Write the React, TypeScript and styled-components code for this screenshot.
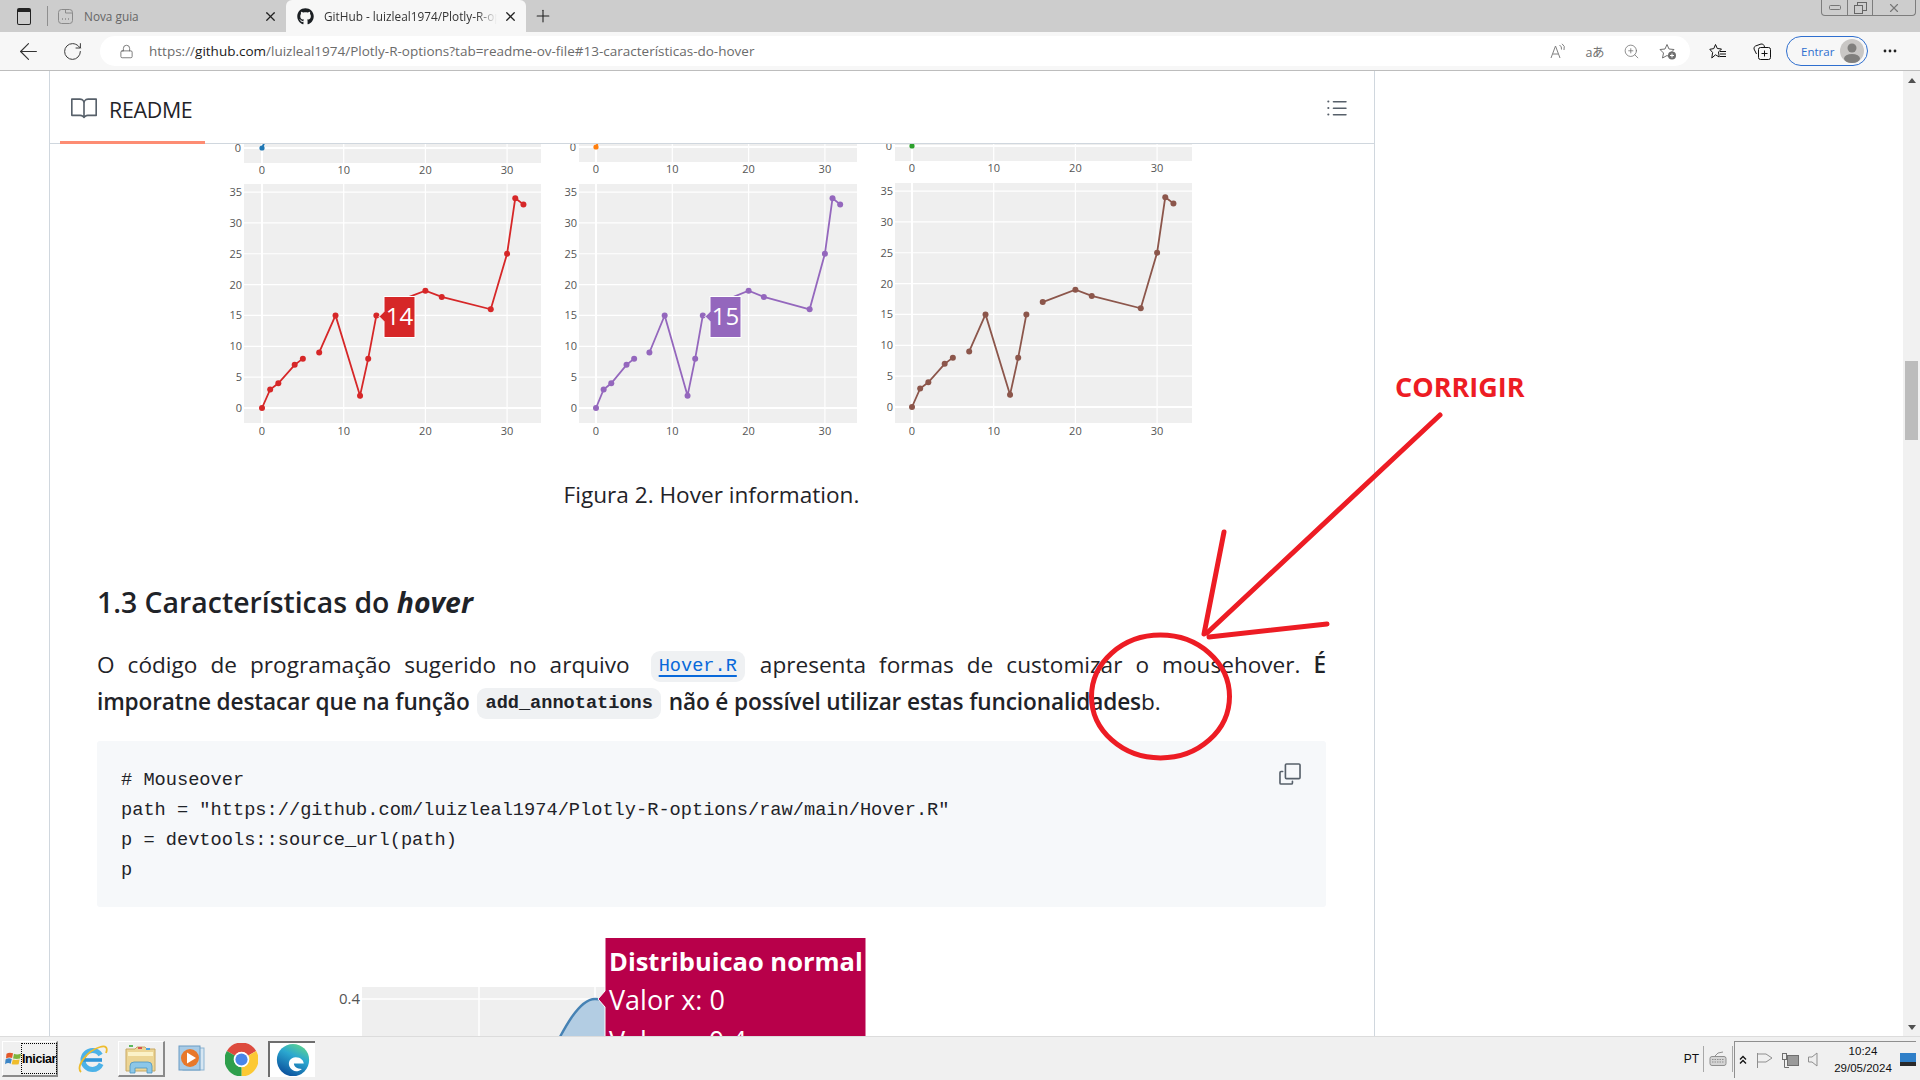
import React from 'react';
import styled, { createGlobalStyle } from 'styled-components';
import { FaGithub } from 'react-icons/fa';
import { GoBook, GoCopy, GoListUnordered } from 'react-icons/go';
import { ArrowLeft, Lock, Plus, RotateCw, X, ZoomIn } from 'lucide-react';

const UI_FONT = '"Open Sans", "Noto Sans", sans-serif';
const MONO_FONT = '"Liberation Mono", monospace';

const GlobalStyle = createGlobalStyle`
  html, body {
    margin: 0;
    height: 100%;
    overflow: hidden;
    background: #fff;
  }
  #root {
    height: 100%;
  }
`;

const Shell = styled.div`
  display: flex;
  flex-direction: column;
  height: 1080px;
  width: 1920px;
  font-family: ${UI_FONT};
  color: #1f2328;
`;

/* browser chrome */
const TabBar = styled.div`
  display: flex;
  align-items: stretch;
  height: 32px;
  flex: none;
  background: #cdcdcd;
`;

const SidebarButton = styled.div`
  display: flex;
  align-items: center;
  justify-content: center;
  width: 47px;
`;

const SidebarGlyph = styled.span`
  display: block;
  width: 12px;
  height: 12px;
  border: 1.5px solid #222;
  border-top-width: 4px;
  border-radius: 2px;
`;

const TabDivider = styled.span`
  width: 1px;
  height: 20px;
  align-self: center;
  background: #8f8f8f;
`;

const Tab = styled.div<{ $active?: boolean; $width: number }>`
  display: flex;
  align-items: center;
  width: ${(p) => p.$width}px;
  padding: 0 8px 0 ${(p) => (p.$active ? 11 : 10)}px;
  box-sizing: border-box;
  border-radius: 6px 6px 0 0;
  background: ${(p) => (p.$active ? '#f7f7f7' : 'transparent')};
  color: ${(p) => (p.$active ? '#333' : '#666')};
  font-size: 11.8px;
`;

const BlankFavicon = styled.svg`
  flex: none;
  width: 15px;
  height: 15px;
  margin-right: 11px;
`;

const TabTitle = styled.span<{ $fade?: boolean }>`
  flex: 1;
  overflow: hidden;
  white-space: nowrap;
  ${(p) =>
    p.$fade &&
    `margin-left: 10px;
     -webkit-mask-image: linear-gradient(to right, #000 88%, transparent);
     mask-image: linear-gradient(to right, #000 88%, transparent);`}
`;

const NewTab = styled.div`
  display: flex;
  align-items: center;
  justify-content: center;
  width: 34px;
`;

const WindowControls = styled.div`
  display: flex;
  margin-left: auto;
  margin-right: 4px;
  height: 16px;
  box-sizing: border-box;
  border: 1px solid #7d7d7d;
  border-top: none;
  border-radius: 0 0 4px 4px;
`;

const WindowButton = styled.div<{ $width: number; $last?: boolean }>`
  display: flex;
  align-items: center;
  justify-content: center;
  width: ${(p) => p.$width}px;
  border-right: ${(p) => (p.$last ? 'none' : '1px solid #7d7d7d')};
`;

const Toolbar = styled.div`
  display: flex;
  align-items: center;
  height: 39px;
  flex: none;
  box-sizing: border-box;
  padding-left: 6px;
  background: #f7f7f7;
  border-bottom: 1px solid #bdbdbd;
`;

const NavButton = styled.div`
  display: flex;
  align-items: center;
  justify-content: center;
  width: 44px;
  height: 30px;
  flex: none;
`;

const UrlPill = styled.div`
  display: flex;
  align-items: center;
  width: 1590px;
  height: 30px;
  flex: none;
  margin: 0 6px;
  padding-left: 19px;
  box-sizing: border-box;
  background: #fff;
  border-radius: 15px;
`;

const UrlText = styled.span`
  margin-left: 15px;
  font-size: 13.5px;
  color: #6b6b6b;
  white-space: nowrap;
`;

const UrlHost = styled.span`
  color: #1a1a1a;
`;

const UrlActions = styled.div`
  display: flex;
  align-items: center;
  margin-left: auto;
  margin-right: 4px;
`;

const UrlAction = styled.div`
  display: flex;
  align-items: center;
  justify-content: center;
  width: 36.5px;
  height: 30px;
  color: #707070;
`;

const TranslateGlyph = styled.span`
  font-family: ${UI_FONT}, 'Noto Sans CJK JP';
  font-size: 12.5px;
  letter-spacing: -0.5px;
  color: #707070;
`;

const EntrarButton = styled.div`
  display: flex;
  align-items: center;
  justify-content: space-between;
  width: 82px;
  height: 30px;
  flex: none;
  margin-left: 2px;
  padding: 0 3px 0 14px;
  box-sizing: border-box;
  border: 1.3px solid #2f6fcf;
  border-radius: 15px;
  color: #2f6fcf;
  font-size: 11.5px;
`;

const Avatar = styled.svg`
  width: 24px;
  height: 24px;
`;

/* page */
const Viewport = styled.div`
  display: flex;
  flex: 1;
  min-height: 0;
`;

const PageArea = styled.div`
  flex: 1;
  min-width: 0;
  overflow: hidden;
  padding-left: 49px;
`;

const Article = styled.article`
  width: 1326px;
  height: 100%;
  box-sizing: border-box;
  overflow: hidden;
  border-left: 1px solid #d0d7de;
  border-right: 1px solid #d0d7de;
`;

const ReadmeHeader = styled.header`
  display: flex;
  align-items: center;
  height: 73px;
  box-sizing: border-box;
  padding: 2px 24px 0 21px;
  border-bottom: 1px solid #d0d7de;
  position: relative;
`;

const ReadmeTitle = styled.span`
  margin-left: 12px;
  padding-top: 2px;
  font-size: 21.4px;
  font-weight: 500;
  letter-spacing: -0.3px;
  color: #1f2328;
`;

const ActiveUnderline = styled.span`
  position: absolute;
  left: 10px;
  bottom: -1px;
  width: 145px;
  height: 3px;
  background: #fd8c73;
`;

const OutlineButton = styled.div`
  display: flex;
  margin-left: auto;
  color: #57606a;
`;

const Content = styled.div`
  padding: 0 48px 0 47px;
`;

const FigureRow = styled.div<{ $top?: number }>`
  display: flex;
  justify-content: center;
  margin-top: ${(p) => p.$top ?? 0}px;
`;

const Caption = styled.p`
  margin: 37px 0 0;
  text-align: center;
  font-size: 22.6px;
  line-height: 36px;
`;

const Heading = styled.h3`
  margin: 69px 0 0;
  font-size: 28.4px;
  line-height: 40px;
  font-weight: 600;

  em {
    font-weight: 700;
  }
`;

const Paragraph = styled.div`
  margin-top: 24px;
  font-size: 22.6px;
`;

const ParagraphLine = styled.p<{ $justify?: boolean }>`
  margin: 0;
  height: 37px;
  line-height: 37px;
  white-space: nowrap;
  ${(p) =>
    p.$justify &&
    `white-space: normal;
     text-align: justify;
     text-align-last: justify;`}
`;

const Strong = styled.strong`
  font-weight: 600;
  letter-spacing: -0.12px;
`;

const InlineCode = styled.code<{ $bold?: boolean; $lead?: number }>`
  margin: 0 2px 0 ${(p) => p.$lead ?? 2}px;
  padding: 5px 8px;
  border-radius: 9px;
  background: #eff1f3;
  font-family: ${MONO_FONT};
  font-size: 18.6px;
  line-height: 1;
  vertical-align: 2px;
  font-weight: ${(p) => (p.$bold ? 700 : 400)};
`;

const CodeLink = styled.a`
  color: #0969da;
  text-decoration: underline;
  text-decoration-thickness: 2px;
  text-underline-offset: 4px;
`;

const CodeBlock = styled.div`
  position: relative;
  height: 166px;
  margin-top: 21px;
  padding: 24px 24px 0;
  box-sizing: border-box;
  background: #f6f8fa;
  border-radius: 3px;
`;

const CodeText = styled.pre`
  margin: 0;
  font-family: ${MONO_FONT};
  font-size: 18.67px;
  line-height: 30px;
  color: #1f2328;
`;

const CopyButton = styled.div`
  position: absolute;
  top: 20px;
  right: 23px;
  display: flex;
  color: #57606a;
`;

/* right scrollbar */
const Scrollbar = styled.div`
  display: flex;
  flex-direction: column;
  align-items: center;
  width: 17px;
  flex: none;
  background: #f1f1f1;
`;

const ScrollArrow = styled.span<{ $down?: boolean }>`
  width: 0;
  height: 0;
  border-left: 4px solid transparent;
  border-right: 4px solid transparent;
  ${(p) =>
    p.$down
      ? 'border-top: 5px solid #505050; margin: auto 0 6px;'
      : 'border-bottom: 5px solid #505050; margin-top: 7px;'}
`;

const ScrollThumb = styled.span`
  width: 13px;
  height: 79px;
  margin-top: 278px;
  background: #bcbcbc;
`;

/* annotation over the page */
const Annotation = styled.svg`
  position: absolute;
  left: 0;
  top: 0;
  width: 1920px;
  height: 1080px;
  pointer-events: none;
`;

const AnnotationLabel = styled.text`
  font-family: ${UI_FONT};
  font-size: 27px;
  font-weight: 700;
  fill: #ed1c24;
`;

/* chart parts */
const TickLabel = styled.text<{ $anchor?: string; $size?: number }>`
  font-family: ${UI_FONT};
  font-size: ${(p) => p.$size ?? 11}px;
  fill: #555;
  text-anchor: ${(p) => p.$anchor ?? 'middle'};
`;

const HoverValue = styled.text`
  font-family: ${UI_FONT};
  font-size: 24px;
  fill: #fff;
  text-anchor: middle;
`;

const HoverTitle = styled.text<{ $bold?: boolean }>`
  font-family: ${UI_FONT};
  font-size: ${(p) => (p.$bold ? 25.5 : 27)}px;
  font-weight: ${(p) => (p.$bold ? 700 : 400)};
  fill: #fff;
`;

/* taskbar */
const Taskbar = styled.div`
  display: flex;
  align-items: stretch;
  height: 44px;
  flex: none;
  box-sizing: border-box;
  padding: 4px 0 3px 2px;
  background: #f0f0f0;
  border-top: 1px solid #dcdcdc;
`;

const StartButton = styled.div`
  display: flex;
  align-items: stretch;
  width: 56px;
  box-sizing: border-box;
  padding: 1px 0 1px 2px;
  border-right: 2px solid #8a8a8a;
  border-bottom: 2px solid #8a8a8a;
  border-left: 1px solid #fff;
  border-top: 1px solid #fff;
`;

const StartLogo = styled.span`
  display: flex;
  align-items: center;
`;

const StartLabel = styled.span`
  display: flex;
  align-items: center;
  margin-left: -1px;
  border: 1px dotted #000;
  font-family: 'Liberation Sans', sans-serif;
  font-size: 12.5px;
  font-weight: 700;
  letter-spacing: -0.4px;
  color: #000;
`;

const TaskItem = styled.div<{ $width: number; $state?: 'raised' | 'pressed'; $shift?: number }>`
  display: flex;
  align-items: center;
  justify-content: center;
  width: ${(p) => p.$width}px;
  box-sizing: border-box;
  padding-left: ${(p) => p.$shift ?? 0}px;
  ${(p) =>
    p.$state === 'raised' &&
    `border-right: 2px solid #8a8a8a; border-bottom: 2px solid #8a8a8a;
     border-left: 1px solid #fff; border-top: 1px solid #fff;`}
  ${(p) =>
    p.$state === 'pressed' &&
    `background: #fff; border-left: 2px solid #6e6e6e; border-top: 2px solid #6e6e6e;`}
`;

const Tray = styled.div`
  display: flex;
  align-items: center;
  margin-left: auto;
  margin-right: 4px;
`;

const LangLabel = styled.span`
  font-family: 'Liberation Sans', sans-serif;
  font-size: 12px;
  color: #111;
  margin-right: 4px;
`;

const TraySep = styled.span`
  width: 1px;
  height: 26px;
  background: #a8a8a8;
`;

const TrayIcons = styled.div`
  display: flex;
  align-items: center;
  height: 100%;
  margin-left: 1px;
  border-left: 1px solid #8f8f8f;
  border-top: 1px solid #8f8f8f;
`;

const Clock = styled.div`
  width: 70px;
  margin-left: 5px;
  margin-right: 2px;
  text-align: center;
  font-family: 'Liberation Sans', sans-serif;
  font-size: 11.5px;
  line-height: 17px;
  color: #111;
`;

type PanelConfig = {
  color: string;
  x0: number;
  xUnit: number;
  y0: number;
  left: number;
  right: number;
  top: number;
  bottom: number;
  upperBottom: number;
  upperZero: number;
  hover?: { x: number; value: string };
};

const yUnit = 6.17;

const segments: Array<Array<[number, number]>> = [
  [[0, 0], [1, 3], [2, 4], [4, 7], [5, 8]],
  [[7, 9], [9, 15], [12, 2], [13, 8], [14, 15]],
  [[16, 17], [20, 19], [22, 18], [28, 16], [30, 25], [31, 34], [32, 33]],
];

const panels: PanelConfig[] = [
  { color: '#d62728', x0: 262, xUnit: 8.17, y0: 408, left: 244, right: 541, top: 184, bottom: 423, upperBottom: 163, upperZero: 148, hover: { x: 384, value: '14' } },
  { color: '#9467bd', x0: 596, xUnit: 7.63, y0: 408, left: 579, right: 857, top: 184, bottom: 423, upperBottom: 162, upperZero: 147, hover: { x: 710, value: '15' } },
  { color: '#8c564b', x0: 912, xUnit: 8.17, y0: 407, left: 895, right: 1192, top: 183, bottom: 423, upperBottom: 161, upperZero: 146 },
];

const upperDots = ['#1f77b4', '#ff7f0e', '#2ca02c'];

const ChartPanel = ({ panel, index }: { panel: PanelConfig; index: number }) => {
  const px = (v: number) => panel.x0 + v * panel.xUnit;
  const py = (v: number) => panel.y0 - v * yUnit;
  const xTicks = [0, 10, 20, 30];
  const yTicks = [0, 5, 10, 15, 20, 25, 30, 35];

  return (
    <g>
      <rect x={panel.left} y={144} width={panel.right - panel.left} height={panel.upperBottom - 144} fill="#efefef" />
      {xTicks.map((t) => (
        <line key={t} x1={px(t)} x2={px(t)} y1={144} y2={panel.upperBottom} stroke="#fff" strokeWidth={t === 0 ? 2 : 1.2} />
      ))}
      <line x1={panel.left} x2={panel.right} y1={panel.upperZero} y2={panel.upperZero} stroke="#fff" strokeWidth={2} />
      <line x1={px(0)} y1={panel.upperZero} x2={px(1)} y2={panel.upperZero - 18} stroke={upperDots[index]} strokeWidth={1.8} />
      <circle cx={px(0)} cy={panel.upperZero} r={2.6} fill={upperDots[index]} />
      <TickLabel x={panel.left - 3} y={panel.upperZero + 4} $anchor="end">0</TickLabel>
      {xTicks.map((t) => (
        <TickLabel key={t} x={px(t)} y={panel.upperBottom + 11}>{t}</TickLabel>
      ))}

      <rect x={panel.left} y={panel.top} width={panel.right - panel.left} height={panel.bottom - panel.top} fill="#efefef" />
      {xTicks.map((t) => (
        <line key={t} x1={px(t)} x2={px(t)} y1={panel.top} y2={panel.bottom} stroke="#fff" strokeWidth={t === 0 ? 2 : 1.2} />
      ))}
      {yTicks.map((t) => (
        <line key={t} x1={panel.left} x2={panel.right} y1={py(t)} y2={py(t)} stroke="#fff" strokeWidth={t === 0 ? 2 : 1.2} />
      ))}
      {yTicks.map((t) => (
        <TickLabel key={t} x={panel.left - 2} y={py(t) + 4} $anchor="end">{t}</TickLabel>
      ))}
      {xTicks.map((t) => (
        <TickLabel key={t} x={px(t)} y={panel.bottom + 12}>{t}</TickLabel>
      ))}
      {segments.map((segment, i) => (
        <g key={i}>
          <polyline
            points={segment.map(([x, y]) => `${px(x)},${py(y)}`).join(' ')}
            fill="none"
            stroke={panel.color}
            strokeWidth={1.8}
          />
          {segment.map(([x, y]) => (
            <circle key={x} cx={px(x)} cy={py(y)} r={3} fill={panel.color} />
          ))}
        </g>
      ))}
      {panel.hover && (
        <g>
          <path
            d={`M${panel.hover.x} 296.5 h31 v41 h-31 v-16 l-5 -5 l5 -5 z`}
            fill={panel.color}
            stroke="#fff"
            strokeWidth={1}
          />
          <HoverValue x={panel.hover.x + 15.5} y={325}>{panel.hover.value}</HoverValue>
        </g>
      )}
    </g>
  );
};

const SmallMultiples = () => (
  <svg width={980} height={296} viewBox="222 144 980 296">
    {panels.map((panel, i) => (
      <ChartPanel key={panel.color} panel={panel} index={i} />
    ))}
  </svg>
);

const DensityChart = () => (
  <svg width={980} height={143} viewBox="222 937 980 143">
    <rect x={362} y={987} width={260} height={93} fill="#efefef" />
    <line x1={479} x2={479} y1={987} y2={1080} stroke="#fff" strokeWidth={1.5} />
    <line x1={595} x2={595} y1={987} y2={1080} stroke="#fff" strokeWidth={1.5} />
    <line x1={362} x2={622} y1={999} y2={999} stroke="#fff" strokeWidth={1.5} />
    <TickLabel x={360} y={1004} $anchor="end" $size={15}>0.4</TickLabel>
    <path d="M548 1060 C564 1028 579 999 595 999 C600 999 606 1001 612 1004 L612 1080 L548 1080 Z" fill="#b3cde3" />
    <path d="M548 1060 C564 1028 579 999 595 999 C600 999 606 1001 612 1004" fill="none" stroke="#4682b4" strokeWidth={2.4} />
    <path d="M605 937.5 H866 V1080 H605 V1007 L598 999 L605 991 Z" fill="#b8004a" stroke="#fff" strokeWidth={1} />
    <HoverTitle x={609} y={971} $bold>Distribuicao normal</HoverTitle>
    <HoverTitle x={609} y={1010}>Valor x: 0</HoverTitle>
    <HoverTitle x={609} y={1051}>Valor y: 0.4</HoverTitle>
  </svg>
);

const CorrigirAnnotation = () => (
  <Annotation viewBox="0 0 1920 1080">
    <AnnotationLabel x={1395} y={397}>CORRIGIR</AnnotationLabel>
    <g fill="none" stroke="#ed1c24" strokeWidth={5} strokeLinecap="round">
      <line x1={1440} y1={415} x2={1207} y2={633} />
      <line x1={1224} y1={532} x2={1204} y2={634} />
      <line x1={1327} y1={624} x2={1209} y2={637} />
      <ellipse cx={1160.5} cy={696.5} rx={69} ry={61.5} />
    </g>
  </Annotation>
);

const WindowsLogo = () => (
  <svg width={17} height={15} viewBox="0 0 18 16">
    <path d="M1.5 3 Q4.5 1 8.5 2.5 L7.5 7.5 Q4.5 6 1 8 Z" fill="#e2582a" />
    <path d="M9.5 3 Q12.5 4.5 17 3 L16 8 Q12.5 9 8.5 8 Z" fill="#7db53c" />
    <path d="M0.5 9 Q4 7 7.2 8.5 L6 13.5 Q3 12 0 14 Z" fill="#3d86c6" />
    <path d="M8.2 9 Q11 10 15.5 9 L14.5 14 Q11 15 7 14 Z" fill="#f0bd2c" />
  </svg>
);

const IeIcon = () => (
  <svg width={32} height={32} viewBox="-16 -16 32 32">
    <circle cx={0.5} cy={1} r={9.5} fill="none" stroke="#4cb2e8" strokeWidth={5} strokeDasharray="50 10" strokeDashoffset={-4} />
    <line x1={-9} y1={1} x2={10} y2={1} stroke="#2f95d8" strokeWidth={3.6} />
    <path d="M-11 13 C-16 8 -6 -8 8 -12 C14 -14 16 -11 14 -6" fill="none" stroke="#eebc2d" strokeWidth={1.8} />
  </svg>
);

const FolderIcon = () => (
  <svg width={34} height={30} viewBox="0 0 34 30">
    <path d="M2 5 H11 L13 3 H21 L23 5 H31 V27 H2 Z" fill="#ecd595" stroke="#c8a862" strokeWidth={1} />
    <rect x={4} y={8} width={25} height={4} fill="#fbf2c8" />
    <rect x={5} y={1} width={4} height={2} fill="#5cb85c" />
    <rect x={14} y={3} width={4} height={2} fill="#d9534f" />
    <rect x={22} y={4} width={4} height={2} fill="#4aa3df" />
    <path d="M6 29 V22 Q6 18 10 18 H24 Q28 18 28 22 V29 H23 V24 H11 V29 Z" fill="#8cc7e8" stroke="#4d94c0" strokeWidth={0.8} />
  </svg>
);

const MediaIcon = () => (
  <svg width={28} height={28} viewBox="0 0 28 28">
    <rect x={5} y={3} width={21} height={22} fill="#d6e6f2" stroke="#8db4d2" />
    <rect x={1} y={1} width={21} height={24} fill="#a8cbe6" stroke="#6b9cc4" />
    <circle cx={12} cy={13} r={9} fill="#e8782a" />
    <path d="M9 7.5 L18 13 L9 18.5 Z" fill="#fff" />
  </svg>
);

const ChromeIcon = () => (
  <svg width={33} height={33} viewBox="-19 -19 38 38">
    <g fill="none" strokeWidth={11}>
      <path d="M-12.12 -7 A14 14 0 0 1 12.12 -7" stroke="#dd4b3e" />
      <path d="M12.12 -7 A14 14 0 0 1 0 14" stroke="#fcc934" />
      <path d="M0 14 A14 14 0 0 1 -12.12 -7" stroke="#2e9f4c" />
    </g>
    <circle r={9} fill="#fff" />
    <circle r={7} fill="#4a86e8" />
  </svg>
);

const EdgeIcon = () => (
  <svg width={34} height={34} viewBox="-19 -19 38 38">
    <defs>
      <linearGradient id="edge-body" x1="0.8" y1="0" x2="0.3" y2="1">
        <stop offset="0" stopColor="#5fd68a" />
        <stop offset="0.4" stopColor="#2ba8d0" />
        <stop offset="1" stopColor="#0b4f9c" />
      </linearGradient>
    </defs>
    <circle r={18} fill="url(#edge-body)" />
    <path d="M-3 9 C-7 3 -3 -3 3 -3 C9 -3 12 1 12 4 L1 4 C1 7 4 10 10 10 C5 14 0 13 -3 9 Z" fill="#fff" />
  </svg>
);

const KeyboardIcon = () => (
  <svg width={18} height={16} viewBox="0 0 18 16" fill="none" stroke="#8f8f8f">
    <path d="M6 5 Q8 1 14 1" />
    <rect x={1} y={5.5} width={16} height={9} rx={2} fill="#d4d4d4" />
    <path d="M3 8.5 H15 M3 11 H15" strokeDasharray="1.5 1" />
  </svg>
);

const App = () => (
  <Shell>
    <GlobalStyle />
    <TabBar>
      <SidebarButton>
        <SidebarGlyph />
      </SidebarButton>
      <TabDivider />
      <Tab $width={238}>
        <BlankFavicon viewBox="0 0 15 15" fill="none" stroke="#8a8a8a">
          <rect x={0.5} y={0.5} width={14} height={14} rx={3} />
          <path d="M7.5 0.5 V4 H14.5" />
          <path d="M4 10 H5 M7 10 H8 M10 10 H11" strokeWidth={1.4} />
        </BlankFavicon>
        <TabTitle>Nova guia</TabTitle>
        <X size={15} color="#222" />
      </Tab>
      <Tab $active $width={240}>
        <FaGithub size={17} color="#1b1f23" />
        <TabTitle $fade>GitHub - luizleal1974/Plotly-R-options</TabTitle>
        <X size={15} color="#222" style={{ marginLeft: 6 }} />
      </Tab>
      <NewTab>
        <Plus size={20} strokeWidth={1.3} color="#222" />
      </NewTab>
      <WindowControls>
        <WindowButton $width={25}>
          <svg width={12} height={5}><rect x={0.5} y={0.5} width={11} height={4} rx={1} fill="none" stroke="#777" /></svg>
        </WindowButton>
        <WindowButton $width={24}>
          <svg width={13} height={12} fill="none" stroke="#666"><rect x={3.5} y={0.5} width={9} height={8} /><rect x={0.5} y={3.5} width={8} height={8} fill="#cdcdcd" /></svg>
        </WindowButton>
        <WindowButton $width={42} $last>
          <X size={14} color="#777" />
        </WindowButton>
      </WindowControls>
    </TabBar>

    <Toolbar>
      <NavButton>
        <ArrowLeft size={27} strokeWidth={1} color="#333" />
      </NavButton>
      <NavButton>
        <RotateCw size={21} strokeWidth={1.1} color="#333" />
      </NavButton>
      <UrlPill>
        <Lock size={15} strokeWidth={1.2} color="#555" />
        <UrlText>
          https://<UrlHost>github.com</UrlHost>/luizleal1974/Plotly-R-options?tab=readme-ov-file#13-características-do-hover
        </UrlText>
        <UrlActions>
          <UrlAction>
            <svg width={16} height={16} viewBox="0 0 16 16" fill="none" stroke="#808080" strokeWidth={1}>
              <path d="M1 15 L5.5 3 L10 15 M2.8 11 H8.2" />
              <path d="M9.5 2 Q12 3.5 11.5 6.5 M12 0.8 Q15.5 3 14 7" />
            </svg>
          </UrlAction>
          <UrlAction>
            <TranslateGlyph>aあ</TranslateGlyph>
          </UrlAction>
          <UrlAction>
            <ZoomIn size={17} strokeWidth={1.1} color="#707070" />
          </UrlAction>
          <UrlAction>
            <svg width={18} height={17} viewBox="0 0 18 17">
              <path d="M8 1.5 L10 6 L15 6.5 L11.5 10 L12.5 15 L8 12.5 L3.5 15 L4.5 10 L1 6.5 L6 6 Z" fill="none" stroke="#707070" />
              <circle cx={13} cy={12.5} r={4} fill="#6e6e6e" />
              <path d="M11 12.5 H15 M13 10.5 V14.5" stroke="#fff" />
            </svg>
          </UrlAction>
        </UrlActions>
      </UrlPill>
      <NavButton>
        <svg width={18} height={17} viewBox="0 0 18 17" fill="none" stroke="#111">
          <path d="M6.5 1.5 L8.3 5.5 L12.5 6 L9.5 9 L10.2 14 L6.5 11.8 L2.8 15 L3.6 9.5 L0.8 6.3 L4.8 5.6 Z" />
          <path d="M11 8.5 H17 M11 11 H17 M11 13.5 H17" />
        </svg>
      </NavButton>
      <NavButton>
        <svg width={18} height={17} viewBox="0 0 18 17" fill="none" stroke="#111">
          <rect x={5.5} y={4.5} width={12} height={12} rx={2} />
          <path d="M11.5 7.5 V13.5 M8.5 10.5 H14.5" />
          <path d="M3.5 11 L1 6 Q0.5 4 2.5 3 L8 1 Q10 0.5 11 2.5 L11.5 4" />
        </svg>
      </NavButton>
      <EntrarButton>
        Entrar
        <Avatar viewBox="0 0 24 24">
          <circle cx={12} cy={12} r={12} fill="#c9c7c5" />
          <circle cx={12} cy={9} r={4.5} fill="#807f7d" />
          <ellipse cx={12} cy={19.5} rx={8} ry={4.5} fill="#807f7d" />
        </Avatar>
      </EntrarButton>
      <NavButton>
        <svg width={14} height={4} fill="#222"><circle cx={2} cy={2} r={1.4} /><circle cx={7} cy={2} r={1.4} /><circle cx={12} cy={2} r={1.4} /></svg>
      </NavButton>
    </Toolbar>

    <Viewport>
      <PageArea>
        <Article>
          <ReadmeHeader>
            <GoBook size={26} color="#57606a" />
            <ReadmeTitle>README</ReadmeTitle>
            <ActiveUnderline />
            <OutlineButton>
              <GoListUnordered size={26} />
            </OutlineButton>
          </ReadmeHeader>
          <Content>
            <FigureRow>
              <SmallMultiples />
            </FigureRow>
            <Caption>Figura 2. Hover information.</Caption>
            <Heading>
              1.3 Características do <em>hover</em>
            </Heading>
            <Paragraph>
              <ParagraphLine $justify>
                O código de programação sugerido no arquivo{' '}
                <InlineCode $lead={8}>
                  <CodeLink>Hover.R</CodeLink>
                </InlineCode>{' '}
                apresenta formas de customizar o mousehover. <Strong>É</Strong>
              </ParagraphLine>
              <ParagraphLine>
                <Strong>imporatne destacar que na função</Strong>{' '}
                <InlineCode $bold>add_annotations</InlineCode>{' '}
                <Strong>não é possível utilizar estas funcionalidades</Strong>b.
              </ParagraphLine>
            </Paragraph>
            <CodeBlock>
              <CodeText>{`# Mouseover
path = "https://github.com/luizleal1974/Plotly-R-options/raw/main/Hover.R"
p = devtools::source_url(path)
p`}</CodeText>
              <CopyButton>
                <GoCopy size={26} />
              </CopyButton>
            </CodeBlock>
            <FigureRow $top={30}>
              <DensityChart />
            </FigureRow>
          </Content>
        </Article>
      </PageArea>
      <Scrollbar>
        <ScrollArrow />
        <ScrollThumb />
        <ScrollArrow $down />
      </Scrollbar>
    </Viewport>

    <Taskbar>
      <StartButton>
        <StartLogo>
          <WindowsLogo />
        </StartLogo>
        <StartLabel>Iniciar</StartLabel>
      </StartButton>
      <TaskItem $width={60} $shift={8}>
        <IeIcon />
      </TaskItem>
      <TaskItem $width={47} $state="raised">
        <FolderIcon />
      </TaskItem>
      <TaskItem $width={50} $shift={4}>
        <MediaIcon />
      </TaskItem>
      <TaskItem $width={53}>
        <ChromeIcon />
      </TaskItem>
      <TaskItem $width={47} $state="pressed">
        <EdgeIcon />
      </TaskItem>
      <Tray>
        <LangLabel>PT</LangLabel>
        <TraySep />
        <TaskItem $width={28}>
          <KeyboardIcon />
        </TaskItem>
        <TraySep />
        <TrayIcons>
          <TaskItem $width={16}>
            <svg width={8} height={10} fill="none" stroke="#111" strokeWidth={1.3}><path d="M1 4.5 L4 1.5 L7 4.5 M1 8.5 L4 5.5 L7 8.5" /></svg>
          </TaskItem>
          <TaskItem $width={26}>
            <svg width={17} height={16} fill="none" stroke="#8f8f8f"><path d="M1.5 1 V16 M1.5 2 H10 L16 6 L10 10 H1.5" /></svg>
          </TaskItem>
          <TaskItem $width={26}>
            <svg width={18} height={16} fill="#9a9a9a" stroke="#6f6f6f"><rect x={6.5} y={3.5} width={11} height={10} /><rect x={1.5} y={1.5} width={4} height={6} fill="#eee" /><path d="M3.5 7.5 V15.5 H8" fill="none" /></svg>
          </TaskItem>
          <TaskItem $width={20}>
            <svg width={10} height={15} fill="#eee" stroke="#8f8f8f"><path d="M0.5 5 H4 L9 1 V14 L4 10 H0.5 Z" /></svg>
          </TaskItem>
          <Clock>
            10:24
            <br />
            29/05/2024
          </Clock>
          <svg width={16} height={13} viewBox="0 0 16 13">
            <rect width={16} height={13} fill="#2f7fc8" />
            <rect y={9} width={16} height={4} fill="#2a2a2a" />
          </svg>
        </TrayIcons>
      </Tray>
    </Taskbar>
    <CorrigirAnnotation />
  </Shell>
);

export default App;
